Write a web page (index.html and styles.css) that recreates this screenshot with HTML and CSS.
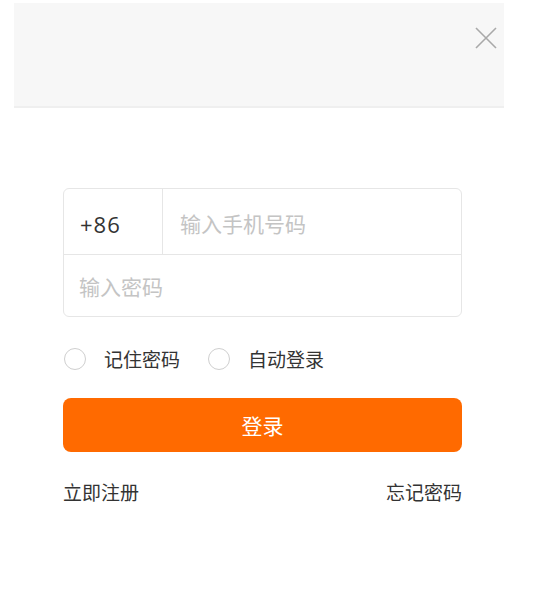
FILE: index.html
```html
<!DOCTYPE html>
<html lang="zh-CN">
<head>
<meta charset="utf-8">
<title>登录</title>
<link rel="stylesheet" href="styles.css">
</head>
<body>
<div class="dialog">
  <div class="dialog-header">
    <button class="close" aria-label="关闭">
      <svg width="22" height="22" viewBox="0 0 22 22"><path d="M1 1 L21 21 M21 1 L1 21" stroke="#a9a9a9" stroke-width="1.6" fill="none"/></svg>
    </button>
  </div>
  <div class="dialog-body">
    <div class="field-box">
      <div class="row">
        <div class="prefix">+86</div>
        <input class="input" type="text" placeholder="输入手机号码">
      </div>
      <div class="row row-pass">
        <input class="input input-pass" type="password" placeholder="输入密码">
      </div>
    </div>
    <div class="options">
      <label class="opt"><span class="radio"></span><span class="opt-text">记住密码</span></label>
      <label class="opt"><span class="radio"></span><span class="opt-text">自动登录</span></label>
    </div>
    <button class="login">登录</button>
    <div class="links">
      <a class="link">立即注册</a>
      <a class="link">忘记密码</a>
    </div>
  </div>
</div>
</body>
</html>
```
FILE: styles.css
```css
* { box-sizing: border-box; }
html, body { margin: 0; padding: 0; background: #fff; }
body {
  font-family: "Noto Sans CJK SC", "Noto Sans", sans-serif;
  color: #333;
}
.dialog {
  margin: 3px 0 0 14px;
  width: 490px;
}
.dialog-header {
  height: 105px;
  background: #f7f7f7;
  border-bottom: 2px solid #efefef;
  display: flex;
  justify-content: flex-end;
  align-items: flex-start;
  padding: 24px 7px 0 0;
}
.close {
  border: 0;
  background: transparent;
  padding: 0;
  width: 22px;
  height: 22px;
  display: block;
}
.close svg { display: block; }
.dialog-body {
  padding: 80px 42px 0 49px;
}
.field-box {
  border: 1px solid #e6e6e6;
  border-radius: 6px;
  height: 129px;
  display: flex;
  flex-direction: column;
}
.row {
  display: flex;
  height: 66px;
  border-bottom: 1px solid #e6e6e6;
}
.row-pass { border-bottom: 0; flex: 1; }
.prefix {
  width: 99px;
  border-right: 1px solid #e6e6e6;
  padding: 4px 0 0 16px;
  display: flex;
  align-items: center;
  font-family: "Open Sans", "Noto Sans", sans-serif;
  font-size: 22px;
  letter-spacing: 1px;
  color: #333;
}
.input {
  flex: 1;
  border: 0;
  outline: 0;
  background: transparent;
  font-family: "Noto Sans CJK SC", sans-serif;
  font-size: 21px;
  padding: 3px 0 0 17px;
  color: #333;
  min-width: 0;
}
.input-pass { padding-left: 15px; padding-top: 0; }
.input::placeholder { color: #c4c4c4; }
.options {
  display: flex;
  align-items: center;
  margin-top: 31px;
  height: 22px;
}
.opt {
  display: flex;
  align-items: center;
  margin-right: 27px;
}
.radio {
  width: 22px;
  height: 22px;
  border: 1.5px solid #cfcfcf;
  border-radius: 50%;
  margin-left: 1px;
  margin-right: 18px;
}
.opt-text {
  font-size: 19px;
  color: #333;
  line-height: 22px;
}
.login {
  display: block;
  width: 100%;
  margin-top: 28px;
  height: 54px;
  border: 0;
  border-radius: 8px;
  background: #ff6a00;
  color: #fff;
  font-family: "Noto Sans CJK SC", sans-serif;
  font-size: 21px;
}
.links {
  display: flex;
  justify-content: space-between;
  margin-top: 28px;
}
.link {
  font-size: 19px;
  color: #333;
  line-height: 24px;
}
```
